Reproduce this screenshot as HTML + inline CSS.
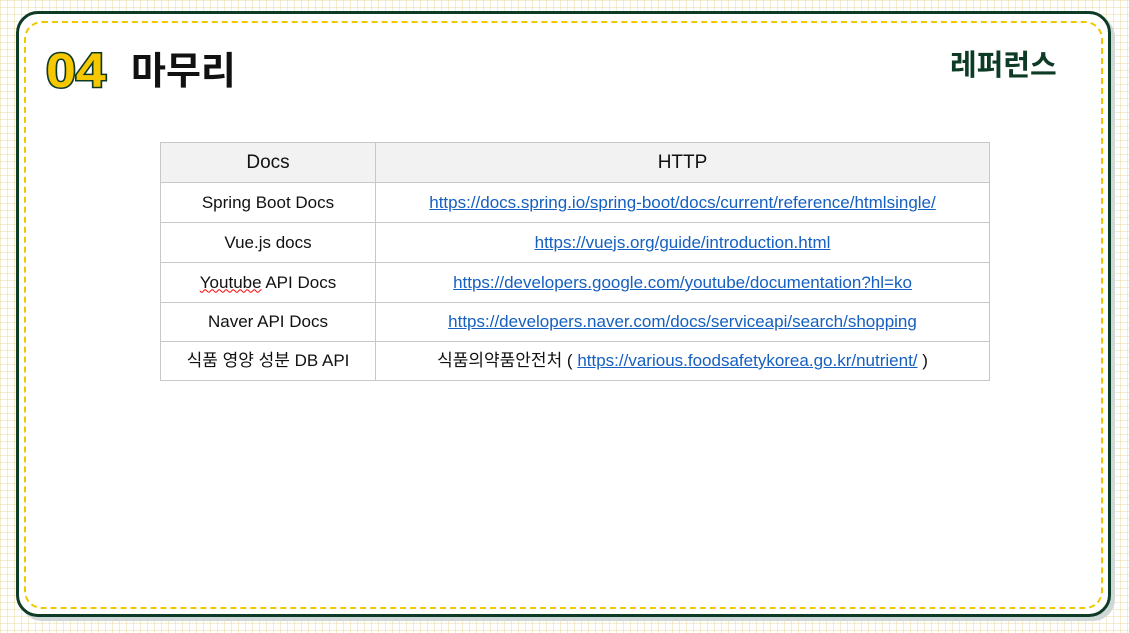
<!DOCTYPE html>
<html><head><meta charset="utf-8"><style>
html,body{margin:0;padding:0;width:1129px;height:633px;overflow:hidden;}
body{position:relative;background-color:#fff;
background-image:linear-gradient(90deg,rgba(225,200,120,.35) 1px,transparent 1px),linear-gradient(rgba(225,200,120,.35) 1px,transparent 1px);
background-size:7px 7px;font-family:"Liberation Sans","Noto Sans CJK KR",sans-serif;}
.shadow{position:absolute;left:20px;top:15px;width:1095px;height:606px;border-radius:22px;background:#cfd8d6;}
.card{position:absolute;left:16px;top:11px;width:1089px;height:600px;border:3.5px solid #0d3b26;border-radius:22px;background:#fff;}
.dash{position:absolute;left:5px;top:7px;right:5px;bottom:5px;border:2px dashed #f0c800;border-radius:18px;}
.num{position:absolute;left:46px;top:46px;font-size:48px;line-height:52px;font-weight:bold;color:#f7c800;-webkit-text-stroke:3px #0d3b26;paint-order:stroke fill;font-family:"Liberation Sans",sans-serif;transform:scaleX(1.12);transform-origin:left;}
.title{position:absolute;left:131px;top:46px;font-size:38px;line-height:52px;font-weight:bold;color:#111;}
.ref{position:absolute;left:950px;top:46px;font-size:29px;line-height:40px;font-weight:bold;color:#0d3b26;}
table{position:absolute;left:160px;top:142px;border-collapse:collapse;width:830px;font-size:17px;color:#111;table-layout:fixed;}
td{border:1px solid #c8c8c8;text-align:center;padding:0;line-height:20px;height:39px;}
tr.s td{height:38px;}
tr:first-child td{background:#f2f2f2;font-size:19px;}
col.a{width:215px;}
a{color:#1560c0;text-decoration:underline;}
.sq{text-decoration:underline wavy red;text-decoration-thickness:1px;}
</style></head><body>
<div class="shadow"></div>
<div class="card"><div class="dash"></div></div>
<div class="num">04</div>
<div class="title">마무리</div>
<div class="ref">레퍼런스</div>
<table>
<colgroup><col class="a"><col></colgroup>
<tr><td>Docs</td><td>HTTP</td></tr>
<tr><td>Spring Boot Docs</td><td><a>https://docs.spring.io/spring-boot/docs/current/reference/htmlsingle/</a></td></tr>
<tr><td>Vue.js docs</td><td><a>https://vuejs.org/guide/introduction.html</a></td></tr>
<tr><td><span class="sq">Youtube</span> API Docs</td><td><a>https://developers.google.com/youtube/documentation?hl=ko</a></td></tr>
<tr class="s"><td>Naver API Docs</td><td><a>https://developers.naver.com/docs/serviceapi/search/shopping</a></td></tr>
<tr class="s"><td>식품 영양 성분 DB API</td><td>식품의약품안전처 ( <a>https://various.foodsafetykorea.go.kr/nutrient/</a> )</td></tr>
</table>
</body></html>
